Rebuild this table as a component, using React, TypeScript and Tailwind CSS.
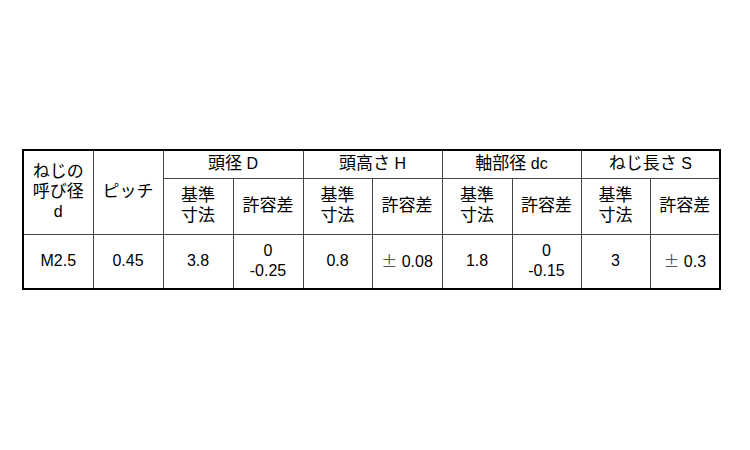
import React from "react";

const font = { fontFamily: '"Liberation Sans", Arial, "Noto Sans CJK JP", sans-serif' };
const jp = { fontFamily: '"Noto Sans CJK JP", sans-serif' };

const groups = [
  ["頭径", " D"],
  ["頭高さ", " H"],
  ["軸部径", " dc"],
  ["ねじ長さ", " S"],
];
const widths = [70, 70, 70, 70, 69, 70, 70, 69, 69, 70];

// CJK glyphs fall back to Noto CJK; keep Liberation metrics for line boxes
const J = ({ children }: { children: React.ReactNode }) => (
  <span className="text-[17px]">{children}</span>
);

const Pm = ({ v }: { v: string }) => (
  <span>
    <span className="text-[#555] text-[16px]" style={jp}>
      ±
    </span>{" "}
    {v}
  </span>
);

const cell = "border border-[#444] text-center align-middle p-0";

const App = () => {
  return (
    <div className="w-[750px] h-[450px] bg-white pt-[149px] pl-[22px]" style={font}>
      <table className="table-fixed border-collapse border-2 border-black text-[16px] leading-[20px] text-black w-[697px]">
        <colgroup>
          {widths.map((w, i) => (
            <col key={i} style={{ width: w }} />
          ))}
        </colgroup>
        <tbody>
          <tr className="h-[28px]">
            <td rowSpan={2} className={cell}>
              <J>ねじの</J>
              <br />
              <J>呼び径</J>
              <br />d
            </td>
            <td rowSpan={2} className={cell}>
              <J>ピッチ</J>
            </td>
            {groups.map((g) => (
              <td key={g[0]} colSpan={2} className={cell}>
                <J>{g[0]}</J>
                {g[1]}
              </td>
            ))}
          </tr>
          <tr className="h-[56px]">
            {groups.map((g) => (
              <React.Fragment key={g[0]}>
                <td className={cell}>
                  <J>基準</J>
                  <br />
                  <J>寸法</J>
                </td>
                <td className={cell}>
                  <J>許容差</J>
                </td>
              </React.Fragment>
            ))}
          </tr>
          <tr className="h-[55px]">
            <td className={cell}>M2.5</td>
            <td className={cell}>0.45</td>
            <td className={cell}>3.8</td>
            <td className={cell}>
              0
              <br />
              -0.25
            </td>
            <td className={cell}>0.8</td>
            <td className={cell}>
              <Pm v="0.08" />
            </td>
            <td className={cell}>1.8</td>
            <td className={cell}>
              0
              <br />
              -0.15
            </td>
            <td className={cell}>3</td>
            <td className={cell}>
              <Pm v="0.3" />
            </td>
          </tr>
        </tbody>
      </table>
    </div>
  );
};

export default App;
